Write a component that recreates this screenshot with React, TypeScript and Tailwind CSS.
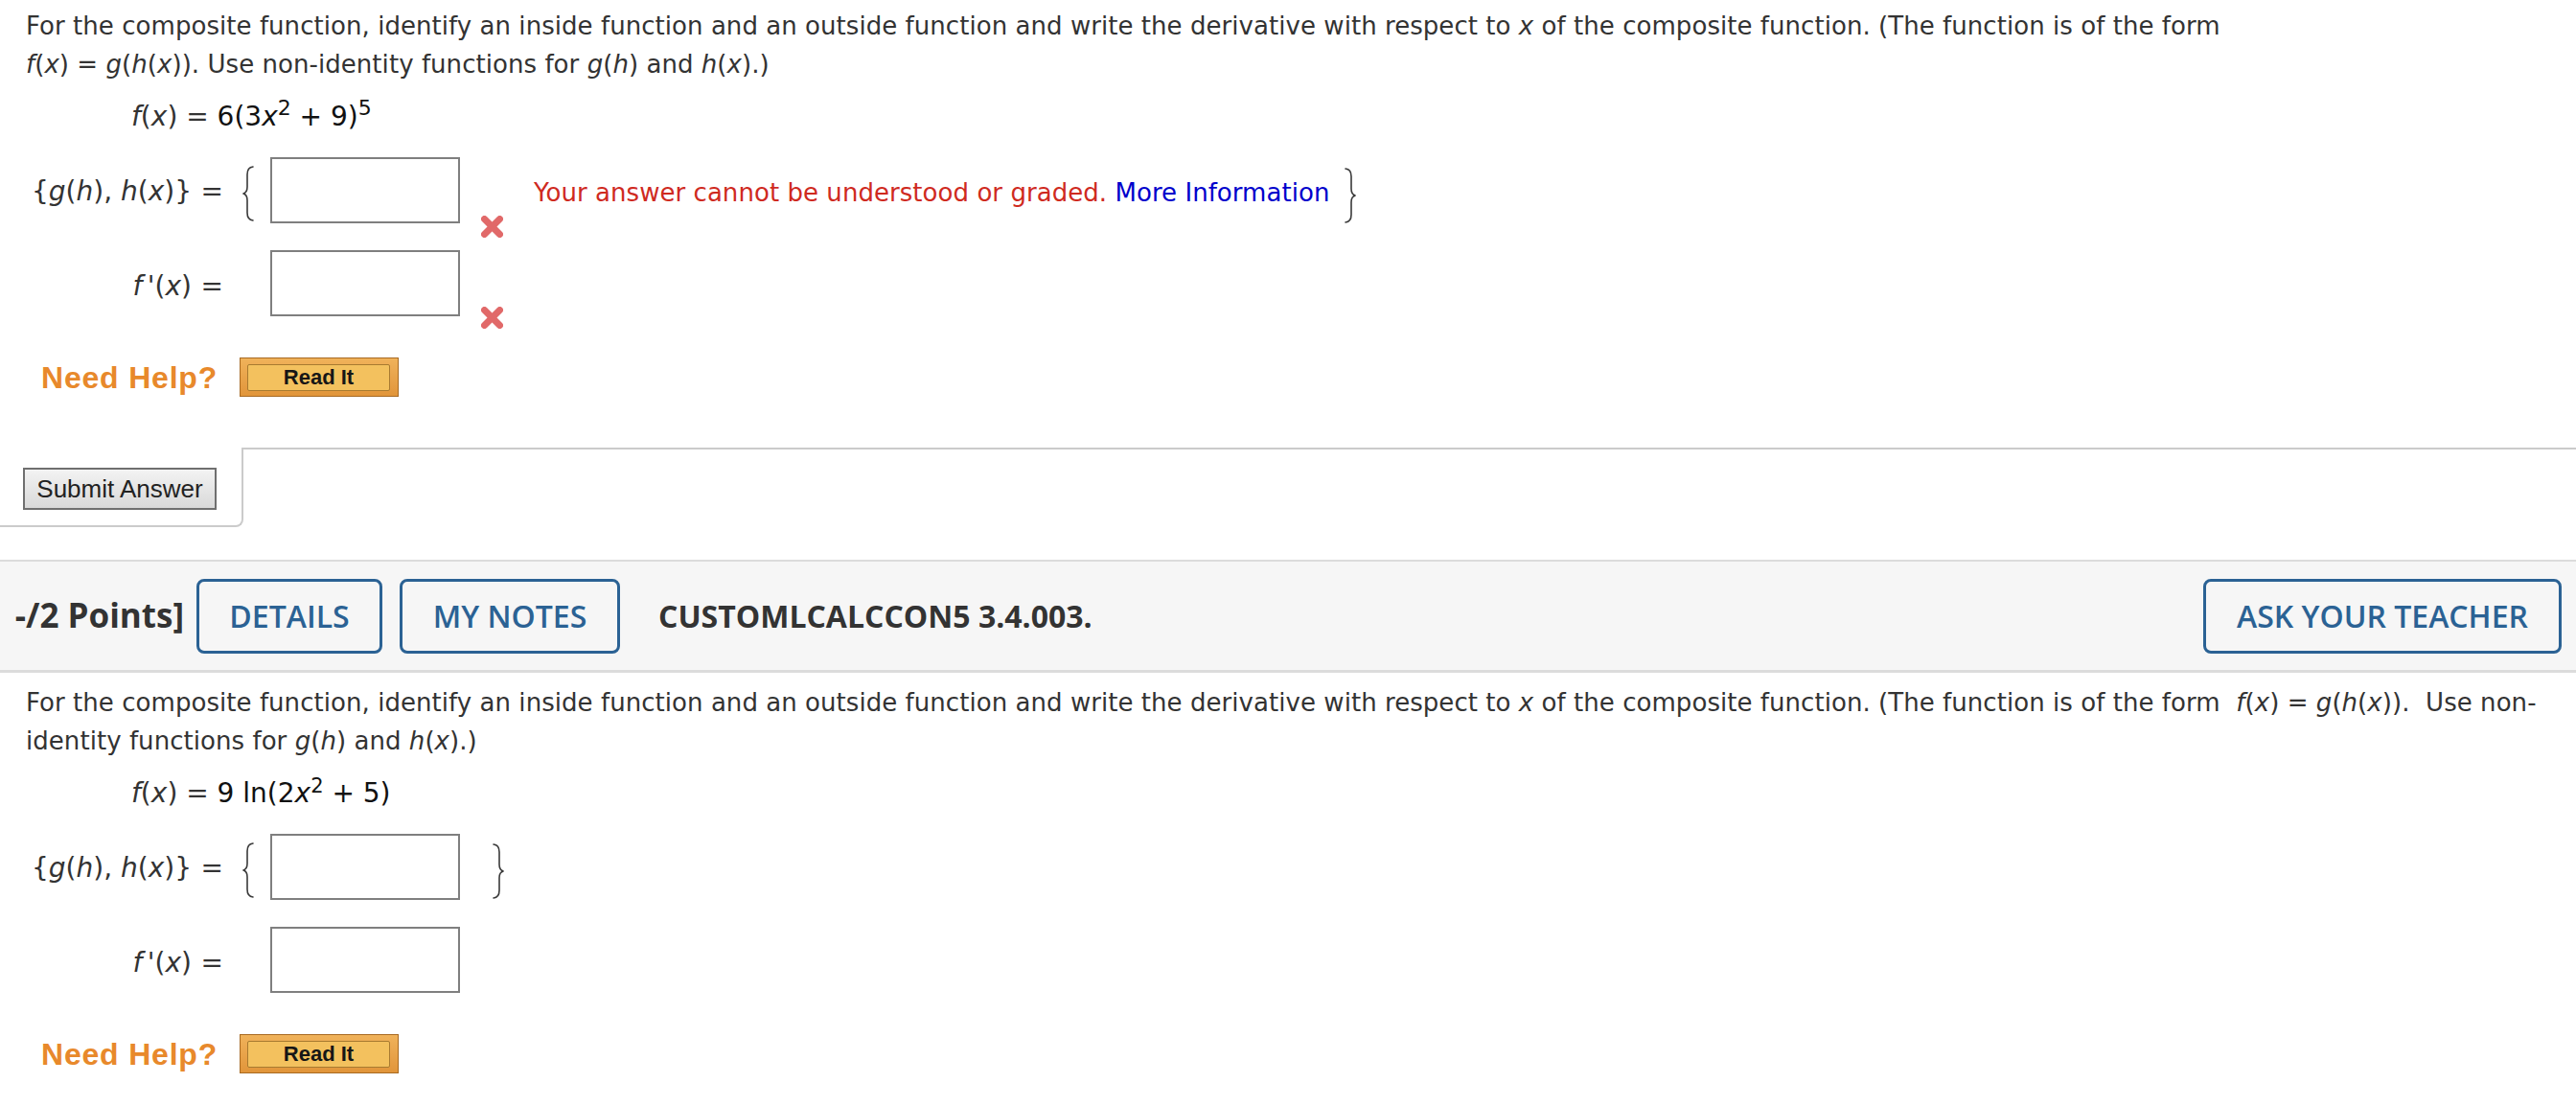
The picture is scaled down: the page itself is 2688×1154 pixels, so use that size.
import React from "react";

const Brace = ({ side }: { side: "l" | "r" }) => (
  <svg width="14" height="58" viewBox="0 0 14 58" fill="none" stroke="#3a3a3a" strokeWidth="1.6" strokeLinecap="round">
    {side === "l" ? (
      <path d="M12 1 C7.5 1.5 6 4 6 9 L6 22 C6 26 4.5 28.5 1.5 29 C4.5 29.5 6 32 6 36 L6 49 C6 54 7.5 56.5 12 57" />
    ) : (
      <path d="M2 1 C6.5 1.5 8 4 8 9 L8 22 C8 26 9.5 28.5 12.5 29 C9.5 29.5 8 32 8 36 L8 49 C8 54 6.5 56.5 2 57" />
    )}
  </svg>
);

const XMark = () => (
  <svg width="27" height="27" viewBox="0 0 27 27">
    <g stroke="#e06262" strokeWidth="7" strokeLinecap="round" opacity="0.95">
      <line x1="5.5" y1="5.5" x2="21.5" y2="21.5" />
      <line x1="21.5" y1="5.5" x2="5.5" y2="21.5" />
    </g>
  </svg>
);

const I = ({ children }: { children: React.ReactNode }) => <i className="italic">{children}</i>;

const InputBox = () => <div className="w-[198px] h-[69px] border-2 border-[#7f7f7f] bg-white shrink-0" />;

const ReadIt = () => (
  <div className="w-[166px] h-[41px] border border-[#a86a22] bg-gradient-to-b from-[#f0b25a] to-[#e1953a] pl-[7px] pr-[8px] pt-[6px] pb-[5px]">
    <div className="w-full h-full border border-[#a87a30] bg-[#f3c15e] rounded-[2px] flex items-center justify-center font-['Liberation_Sans',sans-serif] font-bold text-[22px] text-[#161616] leading-none">
      Read It
    </div>
  </div>
);

const NeedHelp = () => (
  <div className="flex items-center h-[41px]">
    <div className="w-[250px] pl-[43px] font-['Liberation_Sans',sans-serif] font-bold text-[32px] text-[#e8892b] leading-none tracking-[0.8px]">
      Need Help?
    </div>
    <ReadIt />
  </div>
);

type QProps = {
  para: React.ReactNode;
  expr: React.ReactNode;
  error: boolean;
};

const Question = ({ para, expr, error }: QProps) => (
  <div>
    <p className="pl-[27px] text-[26px] leading-[40px] tracking-[0.05px]">{para}</p>
    <div className="pl-[137px] mt-[15px] text-[28px] leading-[40px]">{expr}</div>

    {/* row 1 */}
    <div className="flex items-start h-[69px] mt-[22px]">
      <div className="w-[200px] text-right text-[28px] leading-[40px] mt-[16px] whitespace-nowrap">
        {"{"}
        <I>g</I>(<I>h</I>), <I>h</I>(<I>x</I>)
        {"}"}
      </div>
      <div className="w-[33px] text-right text-[28px] leading-[40px] mt-[16px]">=</div>
      <div className="w-[49px] pl-[19px] pt-[9px]">
        <Brace side="l" />
      </div>
      <InputBox />
      {error ? (
        <>
          <div className="w-[47px] pl-[20px] pt-[59px] shrink-0">
            <XMark />
          </div>
          <div className="ml-[30px] mt-[17px] text-[26px] leading-[40px] whitespace-nowrap tracking-[0.05px]">
            <span className="text-[#cf2a1f]">Your answer cannot be understood or graded. </span>
            <span className="text-[#0000cc]">More Information</span>
          </div>
          <div className="ml-[15px] pt-[11px]">
            <Brace side="r" />
          </div>
        </>
      ) : (
        <div className="ml-[33px] pt-[10px]">
          <Brace side="r" />
        </div>
      )}
    </div>

    {/* row 2 */}
    <div className="flex items-start h-[69px] mt-[28px]">
      <div className="w-[200px] text-right text-[28px] leading-[40px] mt-[18px] whitespace-nowrap">
        <I>f</I>&#8201;'(<I>x</I>)
      </div>
      <div className="w-[33px] text-right text-[28px] leading-[40px] mt-[18px]">=</div>
      <div className="w-[49px]" />
      <InputBox />
      {error && (
        <div className="w-[47px] pl-[20px] pt-[57px] shrink-0">
          <XMark />
        </div>
      )}
    </div>

    <div className="mt-[43px]">
      <NeedHelp />
    </div>
  </div>
);

const HeaderButton = ({ w, children }: { w: string; children: React.ReactNode }) => (
  <div
    className={`${w} h-[78px] border-[3px] border-[#2b6294] rounded-[8px] flex items-center justify-center text-[#2b6294] font-semibold text-[32px] font-['Open_Sans',sans-serif] shrink-0`}
  >
    {children}
  </div>
);

export default function App() {
  return (
    <div className="w-[2688px] h-[1154px] bg-white overflow-hidden font-['DejaVu_Sans','Liberation_Sans',sans-serif] text-[#333333]">
      <div className="pt-[7px]">
        <Question
          error
          para={
            <>
              For the composite function, identify an inside function and an outside function and write the derivative with respect to <I>x</I> of the composite function. (The function is of the form
              <br />
              <I>f</I>(<I>x</I>) = <I>g</I>(<I>h</I>(<I>x</I>)). Use non-identity functions for <I>g</I>(<I>h</I>) and <I>h</I>(<I>x</I>).)
            </>
          }
          expr={
            <>
              <I>f</I>(<I>x</I>) = <span className="text-[#111]">6(3<I>x</I><sup className="text-[22px]">2</sup> + 9)<sup className="text-[22px]">5</sup></span>
            </>
          }
        />
      </div>

      {/* submit tab */}
      <div className="flex mt-[53px] h-[83px]">
        <div className="w-[254px] shrink-0 border-r-2 border-b-2 border-[#cbcbcb] rounded-br-[8px] pl-[24px] pt-[21px]">
          <div className="w-[202px] h-[44px] border-2 border-[#6f6f6f] bg-gradient-to-b from-[#f3f3f3] to-[#d9d9d9] flex items-center justify-center font-['Liberation_Sans',sans-serif] text-[26px] text-[#222] leading-none">
            Submit Answer
          </div>
        </div>
        <div className="flex-1 border-t-2 border-[#cbcbcb]" />
      </div>

      {/* header bar */}
      <div className="mt-[34px] h-[118px] bg-[#f6f6f6] border-t-2 border-b-[3px] border-[#dcdcdc] flex items-center font-['Open_Sans',sans-serif]">
        <div className="w-[192px] shrink-0 text-right font-bold text-[35px] text-[#333] whitespace-nowrap">
          -/2 Points]
        </div>
        <div className="w-[13px] shrink-0" />
        <HeaderButton w="w-[194px]">DETAILS</HeaderButton>
        <div className="w-[18px]" />
        <HeaderButton w="w-[230px]">MY NOTES</HeaderButton>
        <div className="ml-[40px] font-bold text-[32px] text-[#333] whitespace-nowrap">CUSTOMLCALCCON5 3.4.003.</div>
        <div className="flex-1" />
        <HeaderButton w="w-[374px]">ASK YOUR TEACHER</HeaderButton>
        <div className="w-[15px]" />
      </div>

      <div className="pt-[11px]">
        <Question
          error={false}
          para={
            <>
              For the composite function, identify an inside function and an outside function and write the derivative with respect to <I>x</I> of the composite function. (The function is of the form&nbsp; <I>f</I>(<I>x</I>) = <I>g</I>(<I>h</I>(<I>x</I>)).&nbsp; Use non-
              <br />
              identity functions for <I>g</I>(<I>h</I>) and <I>h</I>(<I>x</I>).)
            </>
          }
          expr={
            <>
              <I>f</I>(<I>x</I>) = <span className="text-[#111]">9 ln(2<I>x</I><sup>2</sup> + 5)</span>
            </>
          }
        />
      </div>
    </div>
  );
}
